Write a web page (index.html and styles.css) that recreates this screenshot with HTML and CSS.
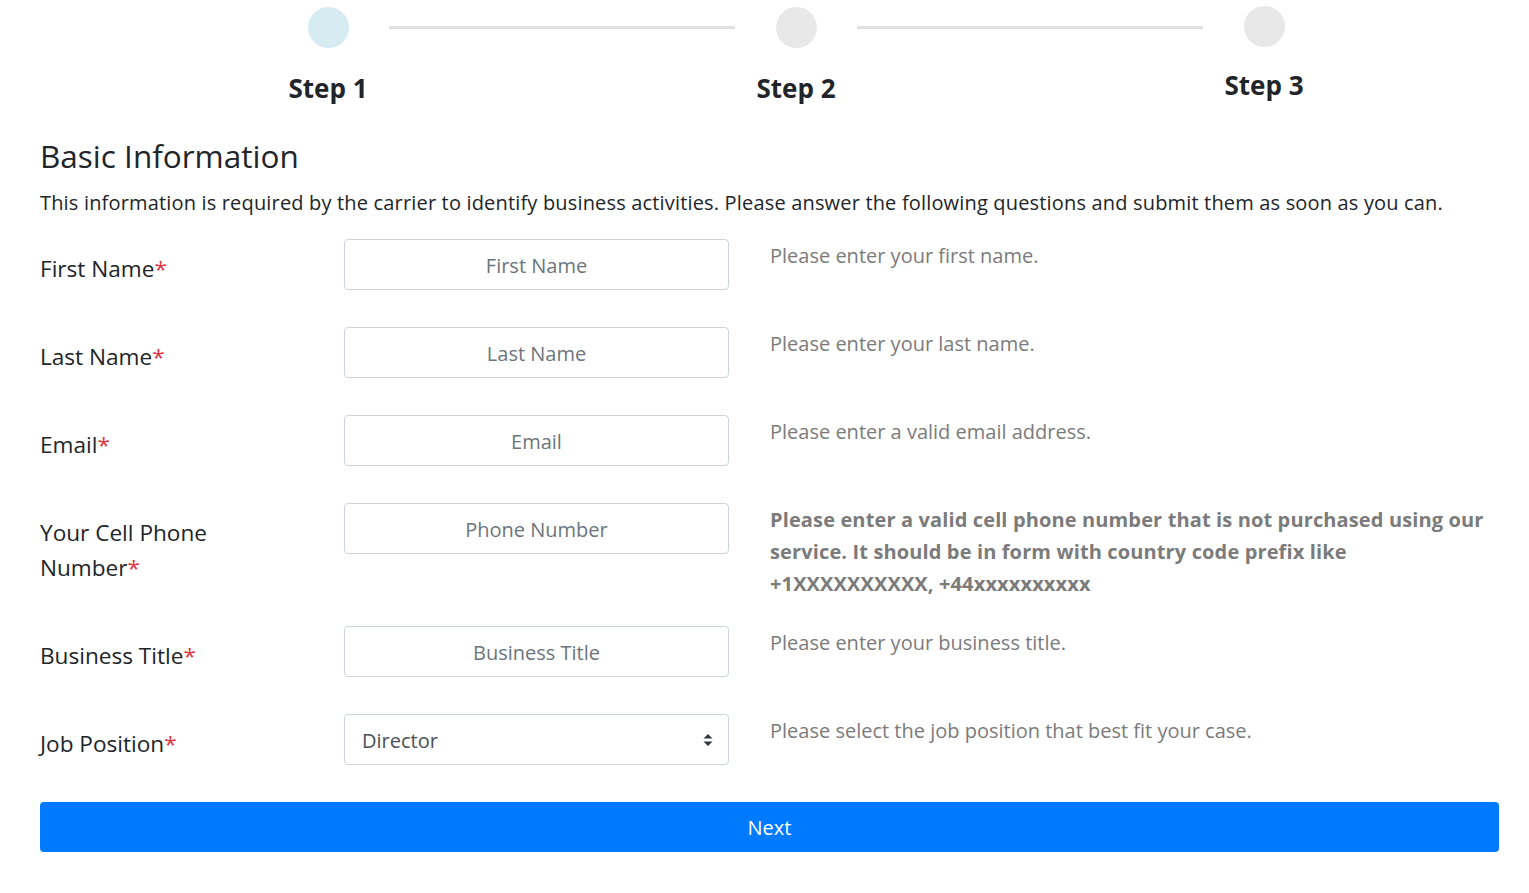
FILE: index.html
```html
<!DOCTYPE html>
<html lang="en">
<head>
  <meta charset="UTF-8" />
  <meta name="viewport" content="width=device-width, initial-scale=1.0"/>
  <title>Basic Information</title>
  <link rel="stylesheet" href="styles.css">
</head>
<body>
  <div class="wizard">
    <div class="steps">
      <div class="step active">
        <span class="dot"></span>
        <span class="step-label">Step 1</span>
      </div>
      <div class="step-line"></div>
      <div class="step">
        <span class="dot"></span>
        <span class="step-label">Step 2</span>
      </div>
      <div class="step-line"></div>
      <div class="step last">
        <span class="dot"></span>
        <span class="step-label">Step 3</span>
      </div>
    </div>

    <h3>Basic Information</h3>
    <p class="lead-text">This information is required by the carrier to identify business activities. Please answer the following questions and submit them as soon as you can.</p>

    <form class="info-form" onsubmit="return false;">
      <div class="form-row">
        <label class="form-label required" for="firstName">First Name</label>
        <div class="field"><input type="text" id="firstName" placeholder="First Name" /></div>
        <div class="help">Please enter your first name.</div>
      </div>

      <div class="form-row">
        <label class="form-label required" for="lastName">Last Name</label>
        <div class="field"><input type="text" id="lastName" placeholder="Last Name" /></div>
        <div class="help">Please enter your last name.</div>
      </div>

      <div class="form-row">
        <label class="form-label required" for="email">Email</label>
        <div class="field"><input type="text" id="email" placeholder="Email" /></div>
        <div class="help">Please enter a valid email address.</div>
      </div>

      <div class="form-row">
        <label class="form-label required" for="phone">Your Cell Phone Number</label>
        <div class="field"><input type="text" id="phone" placeholder="Phone Number" /></div>
        <div class="help strong">Please enter a valid cell phone number that is not purchased using our service. It should be in form with country code prefix like +1XXXXXXXXXX, +44xxxxxxxxxx</div>
      </div>

      <div class="form-row">
        <label class="form-label required" for="title">Business Title</label>
        <div class="field"><input type="text" id="title" placeholder="Business Title" /></div>
        <div class="help">Please enter your business title.</div>
      </div>

      <div class="form-row">
        <label class="form-label required" for="position">Job Position</label>
        <div class="field select-wrap">
          <select id="position">
            <option>Director</option>
            <option>Manager</option>
            <option>Owner</option>
            <option>Other</option>
          </select>
          <svg class="caret" width="10" height="14" viewBox="0 0 10 14">
            <path d="M5 1 L9.5 5.5 H0.5 Z M5 13 L9.5 8.5 H0.5 Z" fill="#343a40"/>
          </svg>
        </div>
        <div class="help">Please select the job position that best fit your case.</div>
      </div>

      <button type="submit" class="btn-next">Next</button>
    </form>
  </div>
</body>
</html>
```

FILE: styles.css
```css
* {
  box-sizing: border-box;
}

body {
  margin: 0;
  font-family: 'Open Sans', 'Noto Sans', sans-serif;
  color: #212529;
  background: #fff;
}

.wizard {
  padding: 7px 30px 40px 40px;
}

/* steps */
.steps {
  display: flex;
  width: 1036px;
  margin-left: 238px;
}

.step {
  width: 100px;
  flex: none;
  display: flex;
  flex-direction: column;
  align-items: center;
}

.step.last {
  margin-top: -1px;
}

.dot {
  width: 41px;
  height: 41px;
  border-radius: 50%;
  background: #e8e8e8;
}

.step.active .dot {
  background: #d7ebf3;
}

.step-label {
  margin-top: 22px;
  font-size: 26px;
  line-height: 36px;
  font-weight: 700;
}

.step.last .step-label {
  margin-top: 20px;
}

.step-line {
  flex: 1;
  height: 3px;
  margin: 19px 11px 0;
  background: #e0e0e0;
}

/* heading */
h3 {
  margin: 31px 0 13px;
  font-size: 31.5px;
  line-height: 38px;
  font-weight: 500;
}

.lead-text {
  margin: 0 0 21px;
  font-size: 20px;
  line-height: 30px;
  letter-spacing: 0.17px;
}

/* form rows */
.form-row {
  display: flex;
  align-items: flex-start;
  margin-bottom: 29px;
}

.form-label {
  width: 304px;
  flex: none;
  padding: 12px 80px 12px 0;
  font-size: 22.6px;
  line-height: 35px;
}

.required::after {
  content: "*";
  color: #dc3545;
}

.field {
  width: 385px;
  flex: none;
}

.field input,
.field select {
  width: 100%;
  height: 51px;
  padding: 2px 16px 0;
  font-family: inherit;
  font-size: 20px;
  border: 1px solid #ced4da;
  border-radius: 4px;
  background: #fff;
  outline: none;
}

.field input {
  text-align: center;
  color: #495057;
}

.field input::placeholder {
  color: #6c757d;
}

.select-wrap {
  position: relative;
}

.field select {
  -webkit-appearance: none;
  appearance: none;
  padding-left: 17px;
  color: #495057;
}

.caret {
  position: absolute;
  right: 16px;
  top: 19px;
  pointer-events: none;
}

.help {
  flex: 1;
  margin-left: 41px;
  padding-top: 1px;
  font-size: 20px;
  line-height: 32px;
  color: #7b7b7b;
}

.help.strong {
  margin-bottom: -3px;
  font-weight: 700;
  letter-spacing: 0.13px;
}

.btn-next {
  display: block;
  width: 100%;
  height: 50px;
  margin-top: 8px;
  border: none;
  border-radius: 4px;
  background: #007bff;
  color: #fff;
  font-family: inherit;
  font-size: 20px;
  cursor: pointer;
}
```
